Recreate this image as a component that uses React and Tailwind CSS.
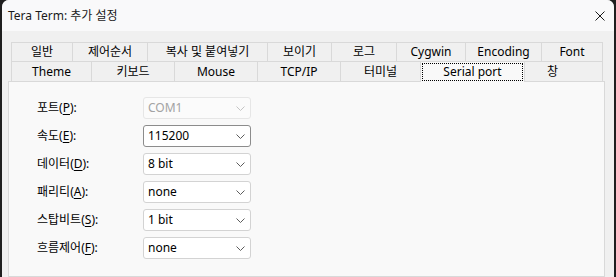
import React from "react";

const row1 = [
  ["일반", 62],
  ["제어순서", 75],
  ["복사 및 붙여넣기", 120],
  ["보이기", 64],
  ["로그", 65],
  ["Cygwin", 69],
  ["Encoding", 76],
  ["Font", 61],
];

const row2 = [
  ["Theme", 81],
  ["키보드", 83],
  ["Mouse", 83],
  ["TCP/IP", 83],
  ["터미널", 80],
];

function Chevron({ disabled }) {
  return (
    <svg width="9" height="5" viewBox="0 0 9 5" fill="none">
      <path
        d="M0.5 0.5 L4.5 4.5 L8.5 0.5"
        stroke={disabled ? "#c4c4c4" : "#5c5c5c"}
        strokeWidth="1"
      />
    </svg>
  );
}

function Combo({ value, state }) {
  const cls =
    state === "disabled"
      ? "border-[#e6e6e6] bg-[#fbfbfb] text-[#a3a3a3]"
      : state === "focused"
      ? "border-[#8c8c8c] bg-white text-black"
      : "border-[#d3d3d3] bg-white text-black";
  return (
    <div
      className={`flex h-[22px] w-[108px] items-center justify-between rounded-[3px] border pl-[4px] pr-[5px] ${cls}`}
    >
      <span className="leading-[16px]">{value}</span>
      <Chevron disabled={state === "disabled"} />
    </div>
  );
}

function Label({ pre, key1 }) {
  return (
    <div className="w-[106px] leading-[16px]">
      {pre}(<span className="underline underline-offset-2">{key1}</span>):
    </div>
  );
}

const rows = [
  ["포트", "P", "COM1", "disabled"],
  ["속도", "E", "115200", "focused"],
  ["데이터", "D", "8 bit", "normal"],
  ["패리티", "A", "none", "normal"],
  ["스탑비트", "S", "1 bit", "normal"],
  ["흐름제어", "F", "none", "normal"],
];

export default function App() {
  return (
    <div className="h-[277px] w-[616px] overflow-hidden bg-[#1f1f1f] px-[2px] font-['Noto_Sans','Noto_Sans_CJK_KR',sans-serif] text-[12px] text-black">
      <div className="flex h-full flex-col overflow-hidden rounded-t-[7px] bg-[#f0f0f0]">
        {/* title bar */}
        <div className="flex h-[31px] shrink-0 items-center justify-between bg-[#f9f9fa] pl-[6px] pr-[9px]">
          <span className="leading-[16px] text-[#1a1a1a]">Tera Term: 추가 설정</span>
          <svg width="10" height="10" viewBox="0 0 10 10" fill="none">
            <path d="M0.5 0.5 L9.5 9.5 M9.5 0.5 L0.5 9.5" stroke="#1a1a1a" strokeWidth="1" />
          </svg>
        </div>

        {/* body */}
        <div className="flex flex-1 flex-col pl-[6px] pr-[9px] pt-[11px]">
          {/* tabs row 1 */}
          <div className="ml-[3px] flex h-[19px]">
            {row1.map(([t, w], i) => (
              <div
                key={t}
                style={{ width: w }}
                className={`flex items-center justify-center border-t border-r border-[#d9d9d9] leading-[16px] ${
                  i === 0 ? "border-l" : ""
                }`}
              >
                {t}
              </div>
            ))}
          </div>
          {/* tabs row 2 */}
          <div className="relative z-10 -mb-[1px] ml-[3px] flex h-[21px]">
            {row2.map(([t, w], i) => (
              <div
                key={t}
                style={{ width: w }}
                className={`flex h-[20px] items-center justify-center border-t border-r border-[#d9d9d9] leading-[16px] ${
                  i === 0 ? "border-l" : ""
                }`}
              >
                {t}
              </div>
            ))}
            <div className="flex h-[21px] w-[104px] border-t border-r border-[#d9d9d9] bg-[#f9f9f9] px-[1px] pb-[1px] pt-[1px]">
              <div className="flex flex-1 items-center justify-center border border-dotted border-black leading-[16px]">
                Serial port
              </div>
            </div>
            <div className="flex h-[20px] w-[78px] items-center justify-center border-t border-r border-[#d9d9d9] pr-[22px] leading-[16px]">
              창
            </div>
          </div>

          {/* panel */}
          <div className="flex flex-1 flex-col gap-[6px] border border-[#d9d9d9] bg-[#f9f9f9] pl-[28px] pt-[15px]">
            {rows.map(([pre, k, v, s]) => (
              <div key={pre} className="flex items-center">
                <Label pre={pre} key1={k} />
                <Combo value={v} state={s} />
              </div>
            ))}
          </div>
        </div>
      </div>
    </div>
  );
}
